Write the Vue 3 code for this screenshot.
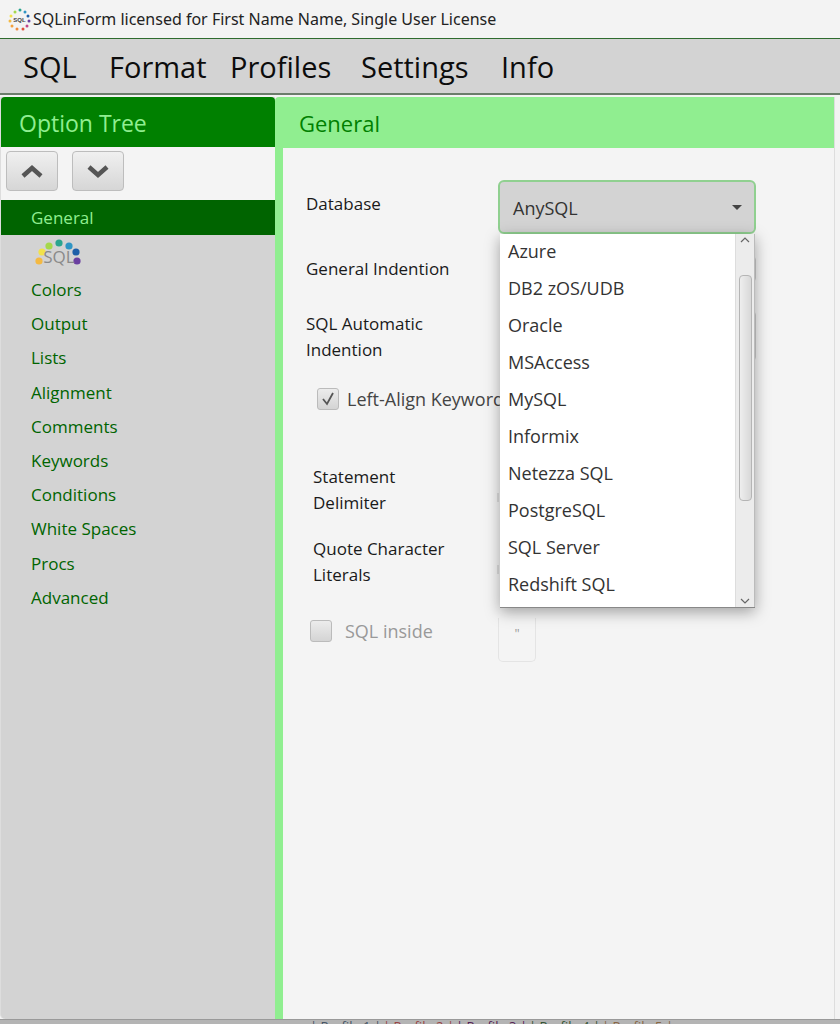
<script setup>
const items = ['Colors','Output','Lists','Alignment','Comments','Keywords','Conditions','White Spaces','Procs','Advanced']
const dbs = ['Azure','DB2 zOS/UDB','Oracle','MSAccess','MySQL','Informix','Netezza SQL','PostgreSQL','SQL Server','Redshift SQL']
const menu = ['SQL','Format','Profiles','Settings','Info']
const dots = [[8,39,'#f4b942'],[11,30,'#f2e24a'],[18,24,'#a5d84b'],[28,21,'#2aa58f'],[38,24,'#2f95c4'],[45,30,'#1e5fa8'],[46,39,'#6a3fa0']]
const smallDots = [[3,14,'#f4b942'],[4,9,'#f2e24a'],[8,5,'#a5d84b'],[13,3,'#2aa58f'],[18,5,'#2f95c4'],[21,9,'#1e5fa8'],[22,14,'#6a3fa0'],[20,19,'#c2458a'],[16,22,'#e0503c'],[10,22,'#ef8a3c'],[5,19,'#f4a03c']]
const profiles = [['Profile 1','u1'],['Profile 2','u2'],['Profile 3','u3'],['Profile 4','u4'],['Profile 5','u5']]
</script>

<template>
  <div class="app">
    <header class="titlebar">
      <svg class="applogo" viewBox="0 0 25 25" width="25" height="25">
        <circle v-for="(d,i) in smallDots" :key="i" :cx="d[0]" :cy="d[1]" r="1.5" :fill="d[2]" />
        <text x="12.5" y="15" text-anchor="middle" class="applogo-text">SQL</text>
      </svg>
      <span>SQLinForm licensed for First Name Name, Single User License</span>
    </header>
    <nav class="menubar">
      <span v-for="m in menu" :key="m">{{ m }}</span>
    </nav>
    <main class="body">
      <aside class="tree">
        <div class="tree-head">Option Tree</div>
        <div class="tree-tools">
          <button class="arrow-btn" aria-label="Up">
            <svg width="26" height="16" viewBox="0 0 26 16"><path d="M4 13 L13 5 L22 13" fill="none" stroke="#555" stroke-width="4.5" /></svg>
          </button>
          <button class="arrow-btn" aria-label="Down">
            <svg width="26" height="16" viewBox="0 0 26 16"><path d="M4 4 L13 12 L22 4" fill="none" stroke="#555" stroke-width="4.5" /></svg>
          </button>
        </div>
        <div class="tree-selected">General</div>
        <div class="tree-logo">
          <svg viewBox="0 0 56 50" width="56" height="50">
            <circle v-for="(d,i) in dots" :key="i" :cx="d[0]" :cy="d[1]" r="3.6" :fill="d[2]" />
            <text x="28" y="41" text-anchor="middle" class="tree-logo-text">SQL</text>
          </svg>
        </div>
        <ul class="tree-list">
          <li v-for="it in items" :key="it">{{ it }}</li>
        </ul>
      </aside>
      <section class="pane">
        <div class="pane-head">General</div>
        <div class="pane-body">
          <div class="row row-db">
            <label>Database</label>
            <div class="combo">
              <span>AnySQL</span>
              <i class="caret"></i>
            </div>
          </div>
          <div class="row row-indent">
            <label>General Indention</label>
            <div class="stub"></div>
          </div>
          <div class="row row-auto">
            <label>SQL Automatic<br />Indention</label>
            <div class="stub"></div>
          </div>
          <div class="check-row">
            <span class="check checked">
              <svg width="18" height="18" viewBox="0 0 18 18"><path d="M4 9 L8 14 L14 3" fill="none" stroke="#555" stroke-width="1.8" /></svg>
            </span>
            <span class="check-label">Left-Align Keywords</span>
          </div>
          <div class="row row-delim">
            <label>Statement<br />Delimiter</label>
            <i class="tick"></i>
          </div>
          <div class="row row-quote">
            <label>Quote Character<br />Literals</label>
            <i class="tick"></i>
          </div>
          <div class="row row-inside">
            <span class="check"></span>
            <span class="muted">SQL inside</span>
            <div class="quote-box">"</div>
          </div>

          <div class="popup">
            <ul>
              <li v-for="d in dbs" :key="d">{{ d }}</li>
            </ul>
            <div class="scroll">
              <svg class="sb-arrow" width="12" height="8" viewBox="0 0 12 8"><path d="M2 6 L6 2 L10 6" fill="none" stroke="#666" stroke-width="1.2" /></svg>
              <div class="thumb"></div>
              <svg class="sb-arrow sb-down" width="12" height="8" viewBox="0 0 12 8"><path d="M2 2 L6 6 L10 2" fill="none" stroke="#666" stroke-width="1.2" /></svg>
            </div>
          </div>
        </div>
      </section>
    </main>
    <footer class="under">
      <span v-for="p in profiles" :key="p[0]" :class="p[1]">| {{ p[0] }} |</span>
    </footer>
  </div>
</template>

<style scoped>
.app { width: 840px; height: 1024px; overflow: hidden; display: flex; flex-direction: column; background: #f3f3f3; font-family: "Open Sans", "Noto Sans", sans-serif; color: #111; }
.titlebar { height: 39px; box-sizing: border-box; display: flex; align-items: center; padding-left: 7px; gap: 1px; background: #f3f3f3; font-family: "Noto Sans", sans-serif; font-size: 16px; color: #222; border-bottom: 1px solid #2e6b2e; flex: none; }
.applogo-text { font: 700 6px "Liberation Sans", sans-serif; fill: #444; }
.menubar { height: 56px; box-sizing: border-box; background: #d3d3d3; border-bottom: 2px solid #6b7d6b; display: grid; grid-template-columns: 86px 121px 131px 140px auto; align-items: center; padding-left: 23px; font-size: 29px; color: #0c0c0c; flex: none; }
.body { flex: 1; display: flex; min-height: 0; padding-top: 2px; background: #f3f3f3; }
.tree { width: 275px; flex: none; background: #d3d3d3; border-left: 1px solid #ddd; box-sizing: border-box; display: flex; flex-direction: column; border-bottom-left-radius: 5px; }
.tree-head { height: 50px; box-sizing: border-box; padding: 2px 0 0 18px; background: #008000; color: #90ee90; font-size: 23px; display: flex; align-items: center; border-radius: 4px 4px 0 0; flex: none; }
.tree-tools { height: 53px; box-sizing: border-box; background: #f4f4f4; display: flex; align-items: center; gap: 14px; padding: 0 0 5px 5px; flex: none; }
.arrow-btn { width: 52px; height: 40px; padding: 0; border: 1px solid #bdbdbd; border-radius: 4px; background: linear-gradient(#f0f0f0, #d6d6d6); display: flex; align-items: center; justify-content: center; }
.tree-selected { height: 35px; background: #006400; color: #90ee90; font-size: 17px; display: flex; align-items: center; padding-left: 30px; flex: none; }
.tree-logo { height: 38px; padding-left: 30px; overflow: hidden; flex: none; }
.tree-logo svg { display: block; margin-top: -13px; }
.tree-logo-text { font: 17px "Open Sans", sans-serif; fill: #8a8a8a; }
.tree-list { list-style: none; margin: 0; padding: 0 0 0 30px; color: #006400; font-size: 17px; }
.tree-list li { height: 34.2px; line-height: 34.2px; }
.pane { flex: 1; display: flex; flex-direction: column; background: #90ee90; margin-right: 5px; padding-left: 8px; border-right: 1px solid #ddd; border-radius: 4px 0 0 0; }
.pane-head { height: 51px; box-sizing: border-box; padding: 0 0 0 16px; color: #008000; font-size: 22px; display: flex; align-items: center; flex: none; }
.pane-body { flex: 1; background: #f4f4f4; position: relative; font-size: 17px; color: #1a1a1a; padding-left: 23px; }
.pane-body label { display: block; line-height: 26px; width: 190px; flex: none; }
.row { display: flex; align-items: flex-start; }
.row-db { padding-top: 32px; height: 54px; box-sizing: content-box; }
.row-db label { padding-top: 11px; }
.combo { margin-left: 2px; width: 258px; height: 54px; box-sizing: border-box; border: 2px solid #90d090; border-radius: 6px; background: #d3d3d3; display: flex; align-items: center; justify-content: space-between; padding: 2px 12px 0 13px; font-size: 18px; color: #333; }
.caret { width: 0; height: 0; margin-top: -2px; border: 5px solid transparent; border-top: 5px solid #444; border-bottom: 0; }
.row-indent { margin-top: 22px; height: 32px; }
.stub { width: 256px; margin-left: 4px; height: 26px; border: 1px solid #ccc; border-radius: 4px; box-sizing: border-box; }
.row-auto { margin-top: 23px; height: 52px; }
.row-auto .stub { height: 50px; }
.check-row { display: flex; align-items: center; padding-left: 11px; height: 26px; margin-top: 23px; gap: 8px; white-space: nowrap; font-size: 18px; }
.check { width: 22px; height: 22px; box-sizing: border-box; border: 1px solid #bbb; border-radius: 3px; background: linear-gradient(#ececec, #d4d4d4); display: flex; align-items: center; justify-content: center; flex: none; }
.check-label { color: #444; }
.row-delim { padding: 52px 0 0 7px; height: 52px; }
.row-quote { padding: 20px 0 0 7px; height: 52px; }
.row-delim label, .row-quote label { width: 184px; }
.tick { width: 2px; height: 9px; margin-top: 29px; background: #ddd; flex: none; }
.row-inside { margin-top: 23px; align-items: center; height: 40px; }
.row-inside .check { margin-left: 4px; }
.muted { color: #999; margin-left: 13px; width: 153px; font-size: 18px; }
.quote-box { width: 38px; height: 44px; border: 1px solid #e4e4e4; border-top: 0; border-radius: 0 0 5px 5px; box-sizing: border-box; text-align: center; font-size: 13px; color: #999; padding-top: 6px; margin-top: 18px; }
.popup { position: absolute; left: 217px; top: 86px; width: 255px; height: 374px; box-sizing: border-box; background: #fff; box-shadow: 0 4px 14px rgba(0,0,0,.35); display: flex; border-bottom: 1px solid #888; }
.popup ul { list-style: none; margin: 0; padding: 0; flex: 1; }
.popup li { height: 37px; line-height: 34px; padding-left: 8px; font-size: 18px; color: #333; }
.scroll { width: 18px; background: #ececec; border-left: 1px solid #ddd; border-right: 1px solid #bbb; position: relative; box-sizing: content-box; }
.sb-arrow { position: absolute; left: 3px; top: 2px; }
.sb-down { top: auto; bottom: 2px; }
.thumb { position: absolute; left: 3px; width: 13px; top: 41px; height: 226px; border: 1px solid #b5b5b5; border-radius: 4px; box-sizing: border-box; background: linear-gradient(90deg, #eee, #d8d8d8); }
.under { flex: none; height: 5px; overflow: hidden; background: #b4b4b4; border-top: 1px solid #999; padding-left: 310px; box-sizing: border-box; font-size: 13px; line-height: 13px; white-space: nowrap; display: flex; gap: 0; }
.under span { width: 73px; flex: none; }
.u1 { color: #456; } .u2 { color: #944; } .u3 { color: #525; } .u4 { color: #353; } .u5 { color: #864; }
</style>
